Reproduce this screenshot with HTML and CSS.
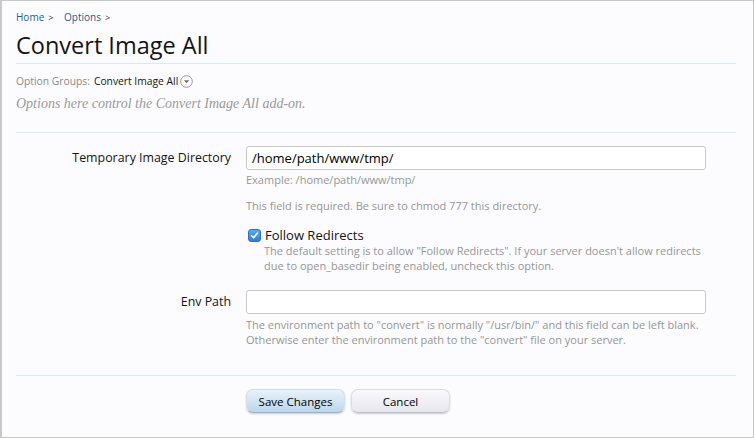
FILE: index.html
```html
<!DOCTYPE html>
<html>
<head>
<meta charset="utf-8">
<link rel="stylesheet" href="styles.css">
</head>
<body>
<div class="frame">
  <div class="breadcrumb">
    <a class="crumb">Home</a><span class="sep">&gt;</span>
    <a class="crumb">Options</a><span class="sep">&gt;</span>
  </div>
  <h1 class="title">Convert Image All</h1>
  <div class="groups">
    <span class="groups-label">Option Groups:</span>
    <span class="groups-value">Convert Image All</span>
    <span class="dd-icon"><svg width="13" height="13" viewBox="0 0 13 13"><circle cx="6.5" cy="6.5" r="5.8" fill="#fff" stroke="#8c8c8c" stroke-width="0.9"/><path d="M3.8 5.2 L9.2 5.2 L6.5 8.2 Z" fill="#6f6f6f"/></svg></span>
  </div>
  <p class="desc">Options here control the Convert Image All add-on.</p>
  <form class="form">
    <div class="row">
      <label class="label">Temporary Image Directory</label>
      <div class="field">
        <div class="input">/home/path/www/tmp/</div>
        <p class="hint">Example: /home/path/www/tmp/</p>
        <p class="hint hint-gap">This field is required. Be sure to chmod 777 this directory.</p>
      </div>
    </div>
    <div class="row row-check">
      <div></div>
      <div class="field">
        <div class="check-line">
          <span class="checkbox"><svg width="9" height="9" viewBox="0 0 9 9"><path d="M1.6 4.8 L3.6 6.8 L7.4 2.2" fill="none" stroke="#fff" stroke-width="1.6" stroke-linecap="round" stroke-linejoin="round"/></svg></span>
          <span class="check-label">Follow Redirects</span>
        </div>
        <p class="hint check-hint">The default setting is to allow "Follow Redirects". If your server doesn't allow redirects due to open_basedir being enabled, uncheck this option.</p>
      </div>
    </div>
    <div class="row row-env">
      <label class="label">Env Path</label>
      <div class="field">
        <div class="input"></div>
        <p class="hint env-hint">The environment path to "convert" is normally "/usr/bin/" and this field can be left blank. Otherwise enter the environment path to the "convert" file on your server.</p>
      </div>
    </div>
    <div class="buttons">
      <div></div>
      <div class="btn-group">
        <button type="button" class="btn btn-primary">Save Changes</button>
        <button type="button" class="btn">Cancel</button>
      </div>
    </div>
  </form>
</div>
</body>
</html>
```
FILE: styles.css
```css
html, body {
  margin: 0;
  padding: 0;
  background: #ffffff;
}
body {
  font-family: "Open Sans", "DejaVu Sans", sans-serif;
  color: #141414;
}
.frame {
  box-sizing: border-box;
  width: 754px;
  height: 438px;
  background: #fcfcff;
  border-top: 1px solid #c8c8cc;
  border-left: 2px solid #c8c8cc;
  border-right: 1px solid #c8c8cc;
  border-bottom: 1px solid #c8c8cc;
  padding: 0 17px 0 14px;
}
.breadcrumb {
  font-size: 10px;
  line-height: 14px;
  padding-top: 9px;
}
.crumb {
  color: #176093;
}
.sep {
  color: #333;
  font-size: 9px;
  margin: 0 8px 0 4px;
}
.title {
  font-size: 23.5px;
  font-weight: normal;
  line-height: 32px;
  margin: 4px 0 0;
  padding-bottom: 2px;
  color: #141414;
  border-bottom: 1px solid #d8ebf5;
}
.groups {
  display: flex;
  align-items: center;
  font-size: 10.3px;
  line-height: 14px;
  margin-top: 10px;
}
.groups-label {
  color: #8a8a8a;
  margin-right: 4px;
}
.groups-value {
  color: #141414;
}
.dd-icon {
  display: inline-flex;
  margin-left: 2px;
}
.desc {
  font-family: "Liberation Serif", "DejaVu Serif", serif;
  font-style: italic;
  font-size: 14px;
  line-height: 18px;
  color: #999;
  margin: 7px 0 0;
  padding-bottom: 19px;
  border-bottom: 1px solid #d8ebf5;
}
.form {
  margin: 0;
  padding-top: 13px;
}
.row {
  display: grid;
  grid-template-columns: 215px 460px;
  column-gap: 15px;
}
.label {
  text-align: right;
  font-size: 12.4px;
  line-height: 16px;
  padding-top: 4px;
  color: #141414;
}
.input {
  box-sizing: border-box;
  height: 24px;
  border: 1px solid #c8c8c8;
  border-radius: 3px;
  background: #fff;
  font-size: 13px;
  line-height: 22px;
  padding: 0 5px;
  color: #000;
}
.hint {
  font-size: 11px;
  line-height: 15px;
  color: #969696;
  margin: 2px 0 0;
}
.hint-gap {
  margin-top: 11px;
}
.row-check {
  margin-top: 15px;
}
.check-line {
  display: flex;
  align-items: center;
  height: 15px;
  padding-left: 2px;
}
.checkbox {
  box-sizing: border-box;
  width: 13px;
  height: 13px;
  border-radius: 3px;
  background: linear-gradient(#5aa6f2, #2f7fe0);
  border: 1px solid #2a72cc;
  display: inline-flex;
  align-items: center;
  justify-content: center;
  margin-right: 4px;
}
.check-label {
  font-size: 13px;
  line-height: 15px;
}
.check-hint {
  margin: 0 0 0 18px;
}
.row-env {
  margin-top: 17px;
}
.env-hint {
  margin-top: 3px;
}
.buttons {
  display: grid;
  grid-template-columns: 215px 460px;
  column-gap: 15px;
  margin-top: 28px;
  border-top: 1px solid #d8ebf5;
  padding-top: 13px;
}
.btn-group {
  display: flex;
  gap: 6px;
}
.btn {
  box-sizing: border-box;
  width: 99px;
  height: 24px;
  border-radius: 7px;
  border: 1px solid #dcdce4;
  border-bottom-color: #c0c0cc;
  background: linear-gradient(#fafafc, #e6e6ee);
  box-shadow: 0 1px 2px rgba(0,0,0,0.2);
  font-family: "Open Sans", "DejaVu Sans", sans-serif;
  font-size: 11.5px;
  color: #000;
  padding: 0;
}
.btn-primary {
  background: linear-gradient(#e9f2fa, #bcd6ec);
  border-color: #cfe0ef;
  border-bottom-color: #93b6d6;
}
```
